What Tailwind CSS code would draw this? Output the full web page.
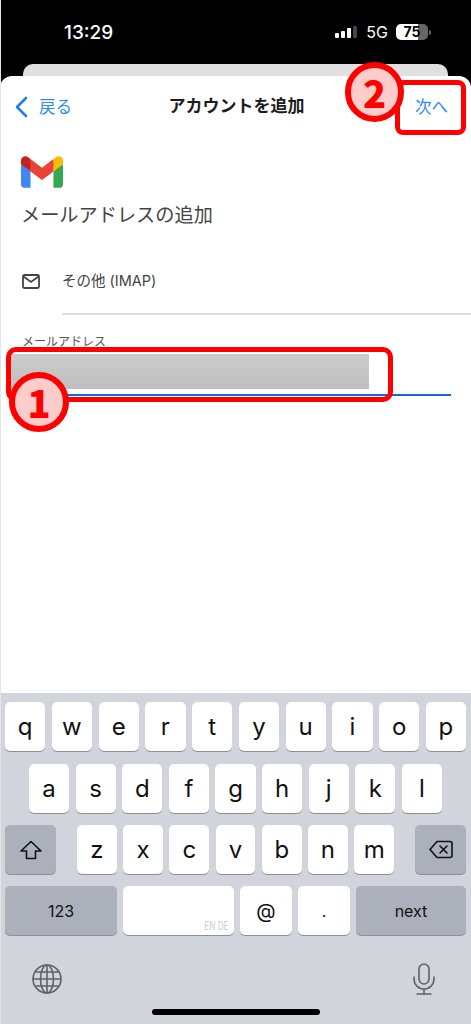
<!DOCTYPE html>
<html lang="ja">
<head>
    <title>アカウントを追加</title>
    <meta name="viewport" content="width=device-width, initial-scale=1.0">
    <script src="https://cdn.jsdelivr.net/npm/@tailwindcss/browser@4"></script>
</head>
<body class="bg-black font-['Inter','Noto_Sans_CJK_JP',sans-serif]">
<div class="relative w-[471px] h-[1024px] overflow-hidden flex flex-col bg-black">
    <!-- Status bar -->
    <div class="h-[64px] shrink-0 flex items-center text-white">
        <span class="ml-[64px] text-[19px] font-medium leading-none">13:29</span>
        <div class="ml-auto flex items-end gap-[2px] h-[12px]">
            <span class="w-[4px] h-[5px] rounded-[1px] bg-white"></span>
            <span class="w-[4px] h-[7px] rounded-[1px] bg-white"></span>
            <span class="w-[4px] h-[10px] rounded-[1px] bg-white"></span>
            <span class="w-[4px] h-[12px] rounded-[1px] bg-[#444]"></span>
        </div>
        <span class="ml-[9px] text-[16px] leading-none">5G</span>
        <div class="ml-[8px] mr-[40px] flex items-center">
            <div class="w-[32px] h-[16px] rounded-[5px] bg-[linear-gradient(90deg,#fff_0,#fff_68%,#666_68%,#666_100%)] flex items-center justify-center text-black text-[14px] font-bold leading-none">75</div>
            <span class="ml-[1px] w-[2px] h-[5px] rounded-r-sm bg-[#666]"></span>
        </div>
    </div>

    <!-- Sheet stacked behind -->
    <div class="h-[12px] shrink-0 mx-[23px] rounded-t-[10px] bg-[#e0e0e0]"></div>

    <!-- Main sheet -->
    <div class="flex-1 bg-white rounded-t-[12px] flex flex-col">
        <header class="h-[62px] shrink-0 relative flex items-center justify-between text-[16.5px] text-[#2f8cf5]">
            <div class="flex items-center ml-[15px] gap-[11px]">
                <svg width="13" height="22" viewBox="0 0 13 22" fill="none" stroke="#1c7ef0" stroke-width="2.6" stroke-linecap="round" stroke-linejoin="round"><path d="M11 2 2 11l9 9"/></svg>
                <span>戻る</span>
            </div>
            <span class="mr-[14px] text-[17px] font-semibold text-[#1c1c1c]">アカウントを追加</span>
            <span class="mr-[23px]">次へ</span>
        </header>

        <div class="pt-[18px] px-[21px]">
            <svg width="42" height="32" viewBox="0 0 256 193">
                <path fill="#4285f4" d="M58.182 192.05V93.14L27.507 65.077 0 49.504v125.091c0 9.658 7.825 17.455 17.455 17.455h40.727z"/>
                <path fill="#34a853" d="M197.818 192.05h40.727c9.659 0 17.455-7.826 17.455-17.455V49.505l-31.156 17.837-27.026 25.798v98.91z"/>
                <path fill="#ea4335" d="M58.182 93.14l-4.174-38.647 4.174-36.989L128 69.868l69.818-52.364 4.67 34.992-4.67 40.644L128 145.504z"/>
                <path fill="#fbbc04" d="M197.818 17.504V93.14L256 49.504V26.231c0-21.585-24.64-33.89-41.89-20.945l-16.292 12.218z"/>
                <path fill="#c5221f" d="M0 49.504l26.759 20.07L58.182 93.14V17.504L41.89 5.286C24.61-7.66 0 4.646 0 26.23v23.273z"/>
            </svg>
            <h2 class="mt-[12px] text-[19.2px] leading-[30px] text-[#444]">メールアドレスの追加</h2>
        </div>

        <div class="mt-[38px] pl-[22px] flex items-center h-[26px]">
            <svg width="18" height="15" viewBox="0 0 18 15" fill="none" stroke="#444" stroke-width="1.8"><rect x="1" y="1" width="16" height="13" rx="1.5"/><path d="M1.5 2.5 9 8l7.5-5.5"/></svg>
            <span class="ml-[22px] text-[14.5px] text-[#444]">その他 (IMAP)</span>
        </div>
        <div class="mt-[19px] ml-[62px] h-[2px] bg-[#ddd]"></div>

        <label class="block mt-[19px] ml-[22px] text-[12px] leading-[16px] text-[#555]">メールアドレス</label>
        <div class="mt-[4px] ml-[10px] w-[359px] h-[35px] bg-[linear-gradient(180deg,#cccccc,#bfbfbf)]"></div>
        <div class="mt-[5px] ml-[22px] mr-[20px] h-[2px] bg-[#1a66d8]"></div>
    </div>

    <!-- Keyboard -->
    <div class="h-[331px] shrink-0 bg-[#d1d4db] pt-[9px] flex flex-col text-[24px] text-[#111]">
        <div class="flex gap-[6.5px] px-[5px] h-[49px]">
            <span class="flex-1 rounded-[5px] bg-white shadow-[0_1px_0_#8e9096] flex items-center justify-center">q</span>
            <span class="flex-1 rounded-[5px] bg-white shadow-[0_1px_0_#8e9096] flex items-center justify-center">w</span>
            <span class="flex-1 rounded-[5px] bg-white shadow-[0_1px_0_#8e9096] flex items-center justify-center">e</span>
            <span class="flex-1 rounded-[5px] bg-white shadow-[0_1px_0_#8e9096] flex items-center justify-center">r</span>
            <span class="flex-1 rounded-[5px] bg-white shadow-[0_1px_0_#8e9096] flex items-center justify-center">t</span>
            <span class="flex-1 rounded-[5px] bg-white shadow-[0_1px_0_#8e9096] flex items-center justify-center">y</span>
            <span class="flex-1 rounded-[5px] bg-white shadow-[0_1px_0_#8e9096] flex items-center justify-center">u</span>
            <span class="flex-1 rounded-[5px] bg-white shadow-[0_1px_0_#8e9096] flex items-center justify-center">i</span>
            <span class="flex-1 rounded-[5px] bg-white shadow-[0_1px_0_#8e9096] flex items-center justify-center">o</span>
            <span class="flex-1 rounded-[5px] bg-white shadow-[0_1px_0_#8e9096] flex items-center justify-center">p</span>
        </div>
        <div class="flex gap-[6.5px] px-[29px] h-[49px] mt-[13px]">
            <span class="flex-1 rounded-[5px] bg-white shadow-[0_1px_0_#8e9096] flex items-center justify-center">a</span>
            <span class="flex-1 rounded-[5px] bg-white shadow-[0_1px_0_#8e9096] flex items-center justify-center">s</span>
            <span class="flex-1 rounded-[5px] bg-white shadow-[0_1px_0_#8e9096] flex items-center justify-center">d</span>
            <span class="flex-1 rounded-[5px] bg-white shadow-[0_1px_0_#8e9096] flex items-center justify-center">f</span>
            <span class="flex-1 rounded-[5px] bg-white shadow-[0_1px_0_#8e9096] flex items-center justify-center">g</span>
            <span class="flex-1 rounded-[5px] bg-white shadow-[0_1px_0_#8e9096] flex items-center justify-center">h</span>
            <span class="flex-1 rounded-[5px] bg-white shadow-[0_1px_0_#8e9096] flex items-center justify-center">j</span>
            <span class="flex-1 rounded-[5px] bg-white shadow-[0_1px_0_#8e9096] flex items-center justify-center">k</span>
            <span class="flex-1 rounded-[5px] bg-white shadow-[0_1px_0_#8e9096] flex items-center justify-center">l</span>
        </div>
        <div class="flex px-[5px] h-[49px] mt-[12px]">
            <span class="w-[51px] rounded-[5px] bg-[#abb0bb] shadow-[0_1px_0_#8e9096] flex items-center justify-center">
                <svg width="24" height="20" viewBox="0 0 24 20" fill="none" stroke="#111" stroke-width="1.6" stroke-linejoin="round"><path d="M12 1.5 2 11h5.5v7.5h9V11H22z"/></svg>
            </span>
            <div class="flex-1 flex gap-[6.5px] px-[21px]">
                <span class="flex-1 rounded-[5px] bg-white shadow-[0_1px_0_#8e9096] flex items-center justify-center">z</span>
                <span class="flex-1 rounded-[5px] bg-white shadow-[0_1px_0_#8e9096] flex items-center justify-center">x</span>
                <span class="flex-1 rounded-[5px] bg-white shadow-[0_1px_0_#8e9096] flex items-center justify-center">c</span>
                <span class="flex-1 rounded-[5px] bg-white shadow-[0_1px_0_#8e9096] flex items-center justify-center">v</span>
                <span class="flex-1 rounded-[5px] bg-white shadow-[0_1px_0_#8e9096] flex items-center justify-center">b</span>
                <span class="flex-1 rounded-[5px] bg-white shadow-[0_1px_0_#8e9096] flex items-center justify-center">n</span>
                <span class="flex-1 rounded-[5px] bg-white shadow-[0_1px_0_#8e9096] flex items-center justify-center">m</span>
            </div>
            <span class="w-[51px] rounded-[5px] bg-[#abb0bb] shadow-[0_1px_0_#8e9096] flex items-center justify-center">
                <svg width="24" height="19" viewBox="0 0 24 19" fill="none" stroke="#111" stroke-width="1.6" stroke-linejoin="round" stroke-linecap="round"><path d="M8 1.5h13a2 2 0 0 1 2 2v12a2 2 0 0 1-2 2H8L1 9.5z"/><path d="m11 6 7 7M18 6l-7 7"/></svg>
            </span>
        </div>
        <div class="flex gap-[6px] px-[5px] h-[49px] mt-[12px] text-[16px]">
            <span class="w-[112px] rounded-[5px] bg-[#abb0bb] shadow-[0_1px_0_#8e9096] flex items-center justify-center">123</span>
            <span class="w-[111px] rounded-[5px] bg-white shadow-[0_1px_0_#8e9096] flex items-end justify-end pr-[5px] pb-[2px] text-[12px] leading-[14px] text-[#cfcfcf]"><span class="scale-x-[.68] origin-right whitespace-nowrap">EN DE</span></span>
            <span class="w-[52px] rounded-[5px] bg-white shadow-[0_1px_0_#8e9096] flex items-center justify-center text-[20px]">@</span>
            <span class="w-[52px] rounded-[5px] bg-white shadow-[0_1px_0_#8e9096] flex items-center justify-center">.</span>
            <span class="flex-1 rounded-[5px] bg-[#abb0bb] shadow-[0_1px_0_#8e9096] flex items-center justify-center">next</span>
        </div>
        <div class="flex items-center justify-between pl-[32px] pr-[36px] mt-[28px] h-[32px]">
            <svg width="30" height="30" viewBox="0 0 30 30" fill="none" stroke="#5f6268" stroke-width="1.6"><circle cx="15" cy="15" r="14"/><ellipse cx="15" cy="15" rx="6.5" ry="14"/><path d="M15 1v28M1 15h28M3.5 8h23M3.5 22h23"/></svg>
            <svg width="22" height="32" viewBox="0 0 22 32" fill="none" stroke="#5f6268" stroke-width="1.6" stroke-linecap="round"><rect x="6" y="1" width="10" height="20" rx="5"/><path d="M1 14v2a10 10 0 0 0 20 0v-2M11 26v5M4 31h14"/></svg>
        </div>
        <div class="mt-[14px] ml-[152px] w-[168px] h-[6px] rounded-full bg-black"></div>
    </div>

    <!-- Hairline at the left edge of the capture -->
    <div class="absolute left-0 top-0 bottom-0 w-px bg-[#e5e5e5]"></div>

    <!-- Red annotations -->
    <div class="absolute left-[6px] top-[347px] w-[387px] h-[55px] rounded-[10px] border-[5px] border-[#ff0000]"></div>
    <div class="absolute left-[9px] top-[372px] w-[60px] h-[60px] rounded-full border-[6px] border-[#ff0000] bg-[#ffcccc] flex items-center justify-center font-['Noto_Sans_CJK_JP',sans-serif] text-[38px] font-black leading-none text-[#ff0000]">1</div>
    <div class="absolute left-[395px] top-[80px] w-[71px] h-[55px] rounded-[8px] border-[5px] border-[#ff0000]"></div>
    <div class="absolute left-[345px] top-[62px] w-[59px] h-[60px] rounded-full border-[6px] border-[#ff0000] bg-[#ffcccc] flex items-center justify-center font-['Noto_Sans_CJK_JP',sans-serif] text-[38px] font-black leading-none text-[#ff0000]">2</div>
</div>
</body>
</html>
